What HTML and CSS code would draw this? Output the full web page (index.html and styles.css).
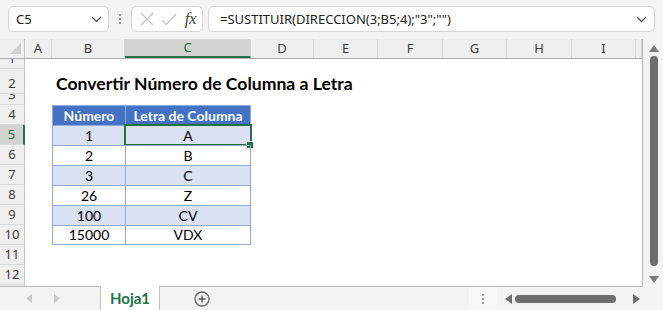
FILE: index.html
```html
<!DOCTYPE html>
<html lang="es">
<head>
    <meta charset="UTF-8">
    <meta name="viewport" content="width=device-width, initial-scale=1.0">
    <title>Hoja1</title>
    <link rel="stylesheet" href="styles.css">
</head>
<body>

    <div class="app">
        <div class="topbar">
            <div class="namebox">
                <span>C5</span>
                <svg width="11" height="7" viewBox="0 0 11 7"><path d="M1 1 L5.5 5.5 L10 1" fill="none" stroke="#555" stroke-width="1.3"/></svg>
            </div>
            <div class="grip"><i></i><i></i><i></i></div>
            <div class="fxbox">
                <svg width="14" height="14" viewBox="0 0 14 14"><path d="M1 1 L13 13 M13 1 L1 13" stroke="#c2c2c2" stroke-width="1.2"/></svg>
                <svg width="16" height="13" viewBox="0 0 16 13"><path d="M1 7 L5.5 11.5 L15 1" fill="none" stroke="#c2c2c2" stroke-width="1.2"/></svg>
                <span class="fx">fx</span>
            </div>
            <div class="formula">
                <span>=SUSTITUIR(DIRECCION(3;B5;4);"3";"")</span>
                <svg width="11" height="7" viewBox="0 0 11 7"><path d="M1 1 L5.5 5.5 L10 1" fill="none" stroke="#555" stroke-width="1.3"/></svg>
            </div>
        </div>

        <div class="main">
            <div class="sheet">
                <div class="colheads">
                    <div class="corner">
                        <svg width="25" height="19" viewBox="0 0 25 19"><polygon points="10,15 21,15 21,4" fill="#d0d0d0"/></svg>
                    </div>
                    <div class="ch">A</div>
                    <div class="ch">B</div>
                    <div class="ch active">C</div>
                    <div class="ch">D</div>
                    <div class="ch">E</div>
                    <div class="ch">F</div>
                    <div class="ch">G</div>
                    <div class="ch">H</div>
                    <div class="ch">I</div>
                    <div class="ch"></div>
                </div>

                <div class="row h10"><div class="rh">1</div></div>
                <div class="row h25">
                    <div class="rh">2</div><div></div>
                    <div class="title">Convertir Número de Columna a Letra</div>
                </div>
                <div class="row h11"><div class="rh">3</div></div>
                <div class="row">
                    <div class="rh">4</div><div></div>
                    <div class="cell head">Número</div>
                    <div class="cell head last">Letra de Columna</div>
                </div>
                <div class="row">
                    <div class="rh active">5</div><div></div>
                    <div class="cell band">1</div>
                    <div class="cell band last selected">A</div>
                </div>
                <div class="row">
                    <div class="rh">6</div><div></div>
                    <div class="cell">2</div>
                    <div class="cell last">B</div>
                </div>
                <div class="row">
                    <div class="rh">7</div><div></div>
                    <div class="cell band">3</div>
                    <div class="cell band last">C</div>
                </div>
                <div class="row">
                    <div class="rh">8</div><div></div>
                    <div class="cell">26</div>
                    <div class="cell last">Z</div>
                </div>
                <div class="row">
                    <div class="rh">9</div><div></div>
                    <div class="cell band">100</div>
                    <div class="cell band last">CV</div>
                </div>
                <div class="row">
                    <div class="rh">10</div><div></div>
                    <div class="cell bottom">15000</div>
                    <div class="cell last bottom">VDX</div>
                </div>
                <div class="row"><div class="rh">11</div></div>
                <div class="row"><div class="rh">12</div></div>
                <div class="row"><div class="rh"></div></div>
            </div>

            <div class="vscroll">
                <svg width="10" height="7" viewBox="0 0 10 7"><polygon points="0,7 10,7 5,0" fill="#777"/></svg>
                <div class="vthumb"></div>
                <svg width="10" height="7" viewBox="0 0 10 7"><polygon points="0,0 10,0 5,7" fill="#777"/></svg>
            </div>
        </div>

        <div class="tabbar">
            <div class="tabnav">
                <svg width="6" height="9" viewBox="0 0 6 9"><polygon points="6,0 6,9 0,4.5" fill="#c8c8c8"/></svg>
                <svg width="6" height="9" viewBox="0 0 6 9"><polygon points="0,0 0,9 6,4.5" fill="#c8c8c8"/></svg>
            </div>
            <div class="tab">Hoja1</div>
            <div class="addsheet">
                <svg width="16" height="16" viewBox="0 0 16 16"><circle cx="8" cy="8" r="7" fill="none" stroke="#666" stroke-width="1.3"/><path d="M8 4.5 V11.5 M4.5 8 H11.5" stroke="#555" stroke-width="1.4"/></svg>
            </div>
            <div class="hscroll">
                <div class="grip"><i></i><i></i><i></i></div>
                <svg width="7" height="10" viewBox="0 0 7 10"><polygon points="7,0 7,10 0,5" fill="#6e6e6e"/></svg>
                <div class="hthumb"></div>
                <svg width="7" height="10" viewBox="0 0 7 10"><polygon points="0,0 0,10 7,5" fill="#6e6e6e"/></svg>
            </div>
        </div>
    </div>

</body>
</html>
```

FILE: styles.css
```css
* {
    margin: 0;
    padding: 0;
    box-sizing: border-box;
}
body {
    font-family: "Noto Sans", "Open Sans", sans-serif;
    background-color: #f3f3f3;
    width: 663px;
    height: 310px;
    overflow: hidden;
}
.app {
    display: flex;
    flex-direction: column;
    height: 310px;
}

/* formula bar */
.topbar {
    height: 39px;
    display: flex;
    align-items: flex-start;
    padding: 6px 8px 0 8px;
}
.namebox,
.fxbox,
.formula {
    height: 26px;
    background-color: white;
    border: 1px solid #d6d6d6;
    border-radius: 5px;
    display: flex;
    align-items: center;
}
.namebox {
    width: 101px;
    padding: 0 6px 0 7px;
    justify-content: space-between;
    font-size: 13px;
    color: #222;
}
.grip {
    width: 22px;
    height: 26px;
    display: flex;
    flex-direction: column;
    align-items: center;
    justify-content: center;
    gap: 2px;
}
.grip i {
    width: 2px;
    height: 2px;
    background-color: #9a9a9a;
}
.fxbox {
    width: 72px;
    padding: 0 6px 0 8px;
    justify-content: space-between;
}
.fx {
    font-family: "Liberation Serif", serif;
    font-style: italic;
    font-size: 17px;
    color: #444;
    letter-spacing: -0.5px;
}
.formula {
    flex: 1;
    margin-left: 5px;
    padding: 0 7px 0 11px;
    justify-content: space-between;
    font-size: 13px;
    color: #222;
}

/* sheet */
.main {
    display: flex;
    height: 248px;
}
.sheet {
    width: 643px;
    height: 248px;
    overflow: hidden;
    background-color: white;
    border-right: 1px solid #b8b8b8;
    border-bottom: 1px solid #b8b8b8;
    font-family: Lato, "Noto Sans", sans-serif;
    font-size: 14px;
}
.colheads {
    display: grid;
    grid-template-columns: 25px 27px 73px 126px 63px 64px 65px 64px 65px 64px 1fr;
    height: 20px;
    background-color: #efefef;
    border-bottom: 1px solid #acacac;
    font-family: "Noto Sans", sans-serif;
    font-size: 13px;
    color: #3c3c3c;
}
.corner {
    border-right: 1px solid #c6c6c6;
}
.corner svg {
    display: block;
}
.ch {
    border-right: 1px solid #d8d8d8;
    text-align: center;
    line-height: 19px;
}
.ch.active {
    background-color: #d3d3d3;
    color: #1d6b3f;
    border-bottom: 2px solid #217346;
    line-height: 17px;
}
.row {
    display: grid;
    grid-template-columns: 25px 27px 73px 126px 1fr;
    height: 20px;
}
.row.h10 { height: 10px; }
.row.h11 { height: 11px; }
.row.h25 { height: 25px; }
.rh {
    background-color: #efefef;
    border-right: 1px solid #c6c6c6;
    border-bottom: 1px solid #d8d8d8;
    font-family: "Noto Sans", sans-serif;
    font-size: 13px;
    color: #3c3c3c;
    display: flex;
    align-items: flex-end;
    justify-content: center;
    line-height: 19px;
    overflow: hidden;
}
.rh.active {
    background-color: #d3d3d3;
    color: #1d6b3f;
    border-right: 2px solid #217346;
}
.title {
    grid-column: 3 / -1;
    font-weight: bold;
    font-size: 17.6px;
    line-height: 20px;
    padding-left: 4px;
    align-self: end;
    color: black;
    white-space: nowrap;
}
.cell {
    border-left: 1px solid #8ea9db;
    border-top: 1px solid #8ea9db;
    text-align: center;
    line-height: 19px;
    color: black;
    position: relative;
}
.cell.last {
    border-right: 1px solid #8ea9db;
}
.cell.bottom {
    border-bottom: 1px solid #8ea9db;
    line-height: 18px;
}
.cell.head {
    background-color: #4472c4;
    color: white;
    font-weight: bold;
}
.cell.band {
    background-color: #d9e1f2;
}
.cell.selected {
    outline: 2px solid #217346;
    outline-offset: -1px;
}
.cell.selected::after {
    content: "";
    position: absolute;
    right: -4px;
    bottom: -4px;
    width: 6px;
    height: 6px;
    background-color: #217346;
    border: 1px solid white;
}

/* vertical scrollbar */
.vscroll {
    width: 20px;
    display: flex;
    flex-direction: column;
    align-items: center;
    padding: 6px 0 4px 2px;
}
.vthumb {
    width: 8px;
    flex: 1;
    margin: 4px 0 10px;
    background-color: #6e6e6e;
    border-radius: 4px;
}

/* sheet tabs */
.tabbar {
    height: 23px;
    display: flex;
    align-items: stretch;
    font-family: Lato, "Noto Sans", sans-serif;
}
.tabnav {
    width: 100px;
    display: flex;
    align-items: center;
    justify-content: center;
    gap: 22px;
    padding-right: 14px;
}
.tab {
    width: 60px;
    background-color: white;
    border-left: 1px solid #c6c6c6;
    border-right: 1px solid #c6c6c6;
    margin-top: -1px;
    color: #217346;
    font-weight: bold;
    font-size: 15px;
    display: flex;
    align-items: center;
    justify-content: center;
}
.addsheet {
    width: 84px;
    display: flex;
    align-items: center;
    justify-content: center;
}
.hscroll {
    flex: 1;
    display: flex;
    align-items: center;
    justify-content: flex-end;
    padding-right: 23px;
}
.hscroll .grip {
    width: 28px;
    height: 23px;
    margin-right: 8px;
    background-color: #f8f8f8;
}
.hthumb {
    width: 101px;
    height: 8px;
    margin: 0 17px 0 3px;
    background-color: #6e6e6e;
    border-radius: 4px;
}
```
